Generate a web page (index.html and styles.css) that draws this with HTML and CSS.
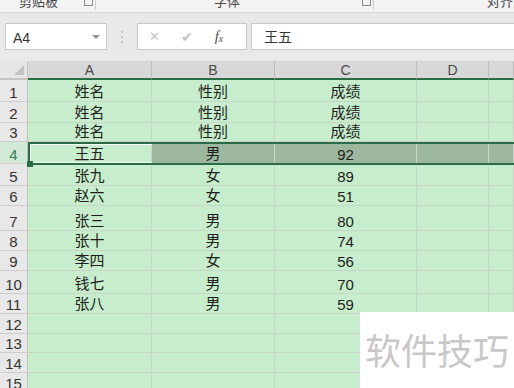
FILE: index.html
```html
<!DOCTYPE html>
<html>
<head>
  <meta charset="utf-8">
  <title>表格</title>
  <link rel="stylesheet" href="styles.css">
</head>
<body>
  <!-- 功能区底部（被裁切的分组标题） -->
  <div class="ribbon">
    <div class="group g1"><span class="glabel">剪贴板</span><span class="launcher"></span></div>
    <div class="group g2"><span class="glabel">字体</span><span class="launcher"></span></div>
    <div class="group g3"><span class="glabel">对齐方式</span></div>
  </div>

  <!-- 编辑栏 -->
  <div class="fbar">
    <div class="namebox">A4<span class="caret"></span></div>
    <div class="grip"><i></i><i></i><i></i></div>
    <div class="fbtns">
      <span class="fbtn cancel">&#x2715;</span>
      <span class="fbtn ok">&#x2714;</span>
      <span class="fbtn fx"><i>f</i><sub>x</sub></span>
    </div>
    <div class="finput">王五</div>
  </div>

  <!-- 工作表 -->
  <div class="sheet" id="sheet">
    <div class="corner"><span class="tri"></span></div>
    <div class="colhead">A</div>
    <div class="colhead">B</div>
    <div class="colhead">C</div>
    <div class="colhead">D</div>
    <div class="colhead"></div>

    <div class="selection"><div class="active"></div></div>
    <div class="handle"></div>
  </div>

  <div class="watermark">软件技巧</div>

  <script>
    // 表格数据：姓名、性别、成绩
    var rows = [
      ["姓名", "性别", "成绩"],
      ["姓名", "性别", "成绩"],
      ["姓名", "性别", "成绩"],
      ["王五", "男", "92"],
      ["张九", "女", "89"],
      ["赵六", "女", "51"],
      ["张三", "男", "80"],
      ["张十", "男", "74"],
      ["李四", "女", "56"],
      ["钱七", "男", "70"],
      ["张八", "男", "59"]
    ];
    var sheet = document.getElementById("sheet");
    var html = "";
    for (var r = 1; r <= 15; r++) {
      var data = rows[r - 1] || ["", "", ""];
      var sel = r === 4;
      // 前三行的“成绩”是文字，其余是数字
      var numClass = /^\d+$/.test(data[2]) ? " num" : "";
      html += '<div class="rowhead' + (sel ? ' hl' : '') + '">' + r + '</div>';
      html += '<div class="cell">' + data[0] + '</div>';
      html += '<div class="cell' + (sel ? ' sel' : '') + '">' + data[1] + '</div>';
      html += '<div class="cell' + numClass + (sel ? ' sel' : '') + '">' + data[2] + '</div>';
      html += '<div class="cell' + (sel ? ' sel' : '') + '"></div>';
      html += '<div class="cell' + (sel ? ' sel' : '') + '"></div>';
    }
    sheet.insertAdjacentHTML("beforeend", html);
  </script>
</body>
</html>
```

FILE: styles.css
```css
body {
  margin: 0;
  width: 514px;
  height: 388px;
  overflow: hidden;
  background-color: #e9e9e9;
  font-family: "Liberation Sans", "Noto Sans CJK SC", sans-serif;
  color: #222;
  position: relative;
}

/* 功能区 */
.ribbon {
  height: 12px;
  background-color: #f3f3f3;
  border-bottom: 1px solid #d6d6d6;
  display: flex;
  overflow: hidden;
}
.group {
  position: relative;
  border-right: 1px solid #c9c9c9;
  height: 9px;
}
.g1 { width: 95px; }
.g2 { width: 277px; }
.g3 { flex: 1; border-right: none; }
.glabel {
  position: absolute;
  top: -7px;
  font-size: 13px;
  line-height: 15px;
  color: #444;
  font-family: "Noto Sans CJK SC", sans-serif;
  white-space: nowrap;
}
.g1 .glabel { left: 19px; }
.g2 .glabel { left: 118px; }
.g3 .glabel { left: 113px; }
.launcher {
  position: absolute;
  right: 2px;
  top: -2px;
  width: 7px;
  height: 7px;
  border: 1px solid #8a8a8a;
  border-top: none;
}

/* 编辑栏 */
.fbar {
  height: 47px;
  display: flex;
  align-items: flex-start;
  padding: 10px 0 0 5px;
  box-sizing: border-box;
}
.namebox {
  width: 102px;
  height: 27px;
  box-sizing: border-box;
  background: #fff;
  border: 1px solid #c8c8c8;
  font-size: 14px;
  color: #333;
  padding: 6px 0 0 7px;
  position: relative;
}
.caret {
  position: absolute;
  right: 6px;
  top: 11px;
  border-left: 4px solid transparent;
  border-right: 4px solid transparent;
  border-top: 4px solid #8d8d8d;
}
.grip {
  width: 30px;
  display: flex;
  flex-direction: column;
  align-items: center;
  gap: 3px;
  padding-top: 8px;
}
.grip i {
  width: 2px;
  height: 2px;
  background: #c2c2c2;
}
.fbtns {
  width: 110px;
  height: 27px;
  box-sizing: border-box;
  background: #fff;
  border: 1px solid #c8c8c8;
  display: flex;
  align-items: center;
  padding-left: 11px;
}
.fbtn {
  width: 36px;
  font-size: 13px;
  color: #c4c4c4;
}
.fbtn.ok { padding-left: 1px; font-size: 14px; }
.fbtn.fx {
  font-family: "Liberation Serif", serif;
  color: #555;
  font-size: 15px;
  padding-left: 2px;
}
.fbtn.fx sub {
  font-size: 10px;
  font-style: italic;
  vertical-align: -1px;
}
.finput {
  flex: 1;
  margin-left: 4px;
  height: 27px;
  box-sizing: border-box;
  background: #fff;
  border: 1px solid #c8c8c8;
  border-right: none;
  font-family: "Noto Sans CJK SC", sans-serif;
  font-size: 14px;
  line-height: 25px;
  padding-left: 12px;
  color: #333;
}

/* 工作表 */
.sheet {
  position: relative;
  display: grid;
  grid-template-columns: 28px 124px 123px 142px 72px 1fr;
  grid-template-rows: 19px 22px 21px 19px 22px 22px 20px 25px 20px 20px 23px 20px 20px 19px 20px 20px;
  margin-top: 1px;
}
.corner {
  background: #e6e6e6;
  border-right: 1px solid #c4c4c4;
  border-bottom: 2px solid #c4c4c4;
  position: relative;
}
.tri {
  position: absolute;
  right: 3px;
  bottom: 3px;
  border-left: 10px solid transparent;
  border-bottom: 10px solid #c3c3c3;
}
.colhead {
  background: #d8d8d8;
  border-right: 1px solid #bcbcbc;
  border-bottom: 2px solid #2c6b48;
  font-size: 14px;
  color: #4a4a4a;
  display: flex;
  justify-content: center;
  align-items: center;
  padding-top: 1px;
}
.rowhead {
  background: #e8e8e8;
  border-right: 1px solid #c0c0c0;
  border-bottom: 1px solid #cdcdcd;
  font-size: 15px;
  color: #333;
  display: flex;
  justify-content: center;
  align-items: flex-end;
  line-height: 1;
  padding-bottom: 1px;
}
.rowhead.hl {
  background: #d3e9d8;
  color: #3b7a52;
}
.cell {
  background: #c7edcc;
  border-right: 1px solid #c8d6c9;
  border-bottom: 1px solid #c8d6c9;
  font-family: "Noto Sans CJK SC", sans-serif;
  font-size: 15px;
  line-height: 1;
  display: flex;
  justify-content: center;
  align-items: flex-end;
  padding-bottom: 3px;
  color: #1e1e1e;
}
.cell.num {
  font-family: "Liberation Sans", sans-serif;
  font-size: 15px;
  line-height: 12px;
  padding-bottom: 2px;
}
.cell.sel {
  background: #9db89f;
}

/* 选中区域与活动单元格 */
.selection {
  position: absolute;
  left: 28px;
  right: -4px;
  top: 81px;
  height: 23px;
  box-sizing: border-box;
  border: 2px solid #2c6b48;
}
.active {
  position: absolute;
  left: 0;
  top: 0;
  width: 122px;
  height: 19px;
  border-top: 1px solid #f4fbf5;
  border-left: 1px solid #f4fbf5;
  border-bottom: 1px solid #f4fbf5;
  box-sizing: border-box;
}
.handle {
  position: absolute;
  left: 27px;
  top: 100px;
  width: 6px;
  height: 6px;
  background: #2c6b48;
}

/* 水印 */
.watermark {
  position: absolute;
  left: 360px;
  top: 312px;
  width: 154px;
  height: 76px;
  background: #fff;
  font-family: "Noto Sans CJK SC", sans-serif;
  font-size: 36px;
  color: #c8c8c8;
  line-height: 1;
  padding: 19px 0 0 5px;
  box-sizing: border-box;
  white-space: nowrap;
}
```
